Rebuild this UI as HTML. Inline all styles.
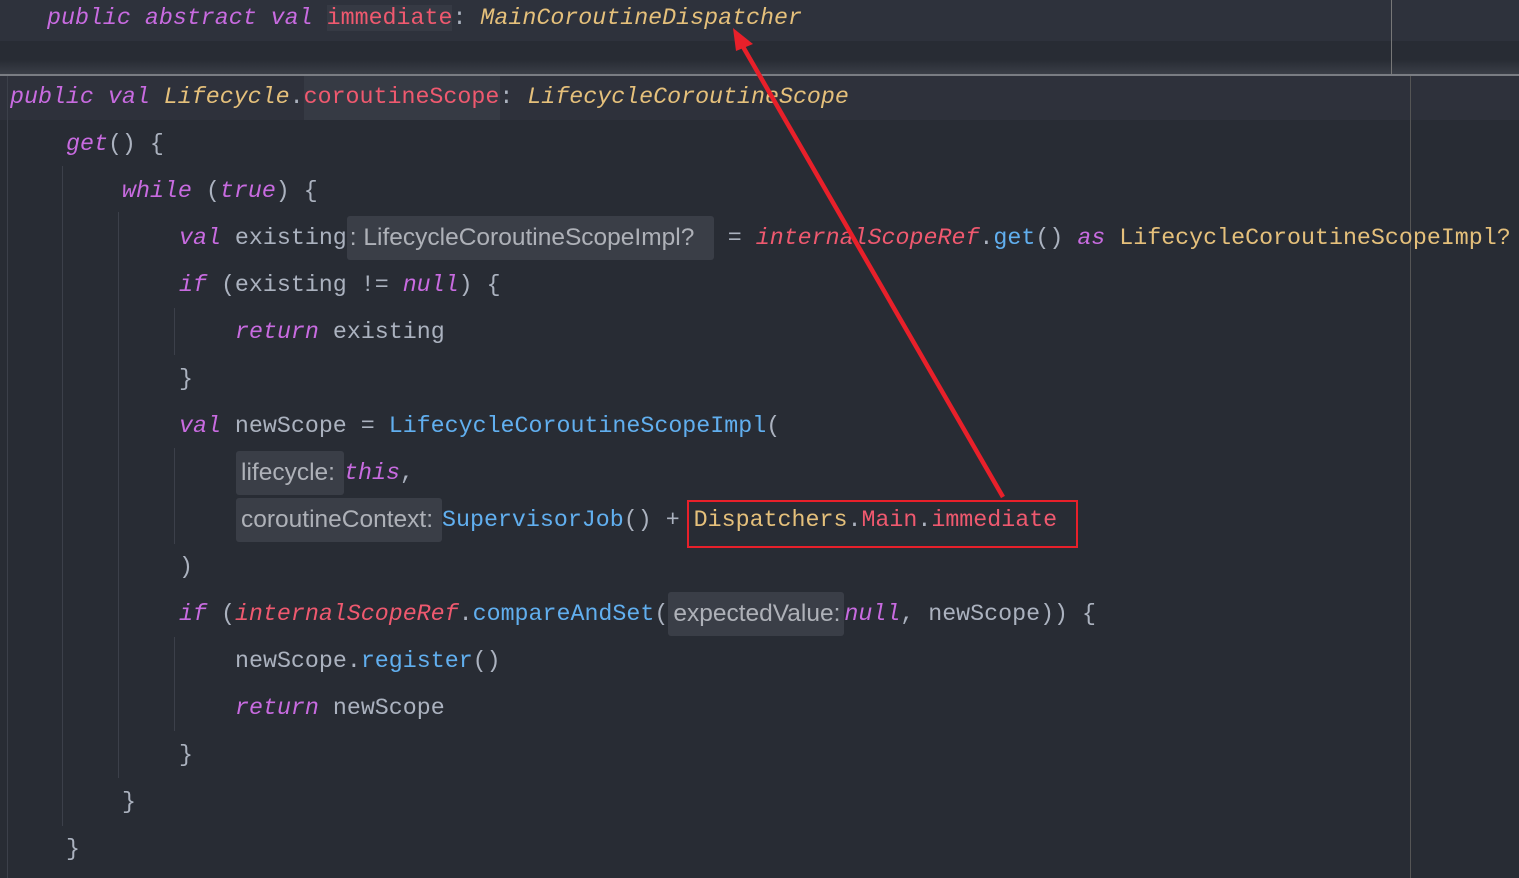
<!DOCTYPE html>
<html><head><meta charset="utf-8"><style>
html,body{margin:0;padding:0}
body{width:1519px;height:878px;background:#282c34;position:relative;overflow:hidden;font-family:"Liberation Mono",monospace;font-size:23.3px;color:#abb2bf}
.ln{position:absolute;height:47px;line-height:47px;white-space:pre}
.k{color:#c86be0;font-style:italic}
.y{color:#e5c07b}
.yi{color:#e5c07b;font-style:italic}
.r{color:#ef596f}
.ri{color:#ef596f;font-style:italic}
.b{color:#61afef}
.h{display:inline-block;background:#3a3e47;color:#aeb1b8;font-family:"Liberation Sans",sans-serif;font-size:24.5px;height:44px;line-height:44px;vertical-align:top;margin-top:1px;border-radius:3px;padding:0 5px;box-sizing:border-box;overflow:hidden}
.g{position:absolute;width:1px;background:#3c404a}
</style></head><body>
<div style="position:absolute;left:0;top:0;width:1519px;height:41px;background:#2e323c"></div>
<div style="position:absolute;left:0;top:60px;width:1519px;height:14px;background:linear-gradient(#282c34,#3a3e47)"></div>
<div style="position:absolute;left:0;top:74px;width:1519px;height:2px;background:#7a7d83"></div>
<div style="position:absolute;left:1391px;top:0;width:1px;height:74px;background:#777"></div>
<div style="position:absolute;left:0;top:76px;width:1519px;height:44px;background:#2e313b"></div>
<div style="position:absolute;left:304px;top:76px;width:196px;height:44px;background:#363a44"></div>
<div style="position:absolute;left:1410px;top:76px;width:1px;height:802px;background:#555"></div>
<div class="g" style="left:7px;top:76px;height:802px"></div>
<div class="g" style="left:62px;top:166px;height:660px"></div>
<div class="g" style="left:118px;top:212px;height:566px"></div>
<div class="g" style="left:174px;top:308px;height:47px"></div>
<div class="g" style="left:174px;top:448px;height:96px"></div>
<div class="g" style="left:174px;top:637px;height:94px"></div>

<div class="ln" style="left:47px;top:-5px"><span class="k">public abstract val</span> <span class="r" style="background:#363a44">immediate</span>: <span class="yi">MainCoroutineDispatcher</span></div>
<div class="ln" style="left:10px;top:74px"><span class="k">public val</span> <span class="yi">Lifecycle</span>.<span class="r">coroutineScope</span>: <span class="yi">LifecycleCoroutineScope</span></div>
<div class="ln" style="left:66px;top:121px"><span class="k">get</span>() {</div>
<div class="ln" style="left:122px;top:168px"><span class="k">while</span> (<span class="k">true</span>) {</div>
<div class="ln" style="left:179px;top:215px"><span class="k">val</span> existing<span class="h" style="width:367px;margin-left:0px;padding-left:3px">: LifecycleCoroutineScopeImpl?</span> = <span class="ri">internalScopeRef</span>.<span class="b">get</span>() <span class="k">as</span> <span class="y">LifecycleCoroutineScopeImpl?</span></div>
<div class="ln" style="left:179px;top:262px"><span class="k">if</span> (existing != <span class="k">null</span>) {</div>
<div class="ln" style="left:235px;top:309px"><span class="k">return</span> existing</div>
<div class="ln" style="left:179px;top:356px">}</div>
<div class="ln" style="left:179px;top:403px"><span class="k">val</span> newScope = <span class="b">LifecycleCoroutineScopeImpl</span>(</div>
<div class="ln" style="left:236px;top:450px"><span class="h" style="width:108px">lifecycle:</span><span class="k">this</span>,</div>
<div class="ln" style="left:236px;top:497px"><span class="h" style="width:206px">coroutineContext:</span><span class="b">SupervisorJob</span>() + <span class="y">Dispatchers</span>.<span class="r">Main</span>.<span class="r">immediate</span></div>
<div class="ln" style="left:179px;top:544px">)</div>
<div class="ln" style="left:179px;top:591px"><span class="k">if</span> (<span class="ri">internalScopeRef</span>.<span class="b">compareAndSet</span>(<span class="h" style="width:176px">expectedValue:</span><span class="k">null</span>, newScope)) {</div>
<div class="ln" style="left:235px;top:638px">newScope.<span class="b">register</span>()</div>
<div class="ln" style="left:235px;top:685px"><span class="k">return</span> newScope</div>
<div class="ln" style="left:179px;top:732px">}</div>
<div class="ln" style="left:122px;top:779px">}</div>
<div class="ln" style="left:66px;top:826px">}</div>

<div style="position:absolute;left:687px;top:500px;width:387px;height:44px;border:2px solid #e8202a"></div>
<svg style="position:absolute;left:0;top:0" width="1519" height="878">
<line x1="1003" y1="497" x2="742" y2="45" stroke="#e8202a" stroke-width="4.5"/>
<polygon points="733,28 753,44 736,51" fill="#e8202a"/>
</svg>
</body></html>
